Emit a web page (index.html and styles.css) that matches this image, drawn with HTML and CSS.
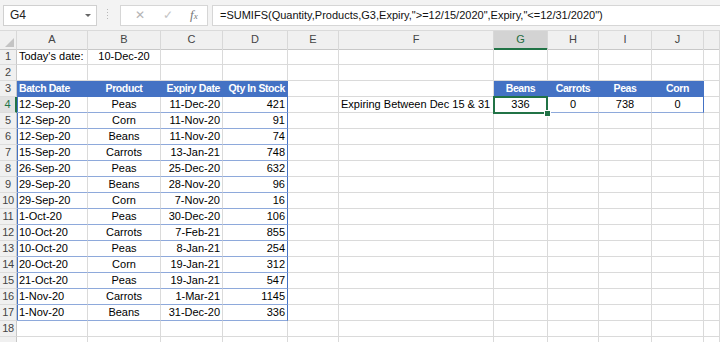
FILE: index.html
```html
<!DOCTYPE html>
<html lang="en">
<head>
    <meta charset="UTF-8">
    <meta name="viewport" content="width=device-width, initial-scale=1.0">
    <title>Expiry - SUMIFS</title>
    <link rel="stylesheet" href="styles.css">
</head>
<body>
    <div class="toolbar">
        <div class="name-box">
            <span>G4</span>
            <span class="arrow"></span>
        </div>
        <div class="grip"></div>
        <div class="fx-box">
            <span class="fx-icon">&#x2715;</span>
            <span class="fx-icon check">&#x2713;</span>
            <span class="fx-label"><i>f</i><small>x</small></span>
        </div>
        <div class="formula">=SUMIFS(Quantity,Products,G3,Expiry,"&gt;=12/15/2020",Expiry,"&lt;=12/31/2020")</div>
    </div>

    <div class="sheet">
        <div class="row col-head">
            <div class="corner"><span class="tri"></span></div>
            <div>A</div><div>B</div><div>C</div><div>D</div><div>E</div><div>F</div>
            <div class="sel">G</div><div>H</div><div>I</div><div>J</div><div></div>
        </div>

        <div class="row">
            <div class="rh">1</div>
            <div class="c">Today's date:</div><div class="c mid">10-Dec-20</div><div class="c"></div><div class="c"></div>
            <div class="c"></div><div class="c"></div><div class="c"></div><div class="c"></div><div class="c"></div><div class="c"></div><div class="c"></div>
        </div>
        <div class="row">
            <div class="rh">2</div>
            <div class="c"></div><div class="c"></div><div class="c"></div><div class="c"></div>
            <div class="c"></div><div class="c"></div><div class="c"></div><div class="c"></div><div class="c"></div><div class="c"></div><div class="c"></div>
        </div>
        <div class="row">
            <div class="rh">3</div>
            <div class="c th">Batch Date</div><div class="c th mid">Product</div><div class="c th right">Expiry Date</div><div class="c th right">Qty In Stock</div>
            <div class="c"></div><div class="c"></div>
            <div class="c th mid">Beans</div><div class="c th mid">Carrots</div><div class="c th mid">Peas</div><div class="c th mid">Corn</div><div class="c"></div>
        </div>
        <div class="row">
            <div class="rh active">4</div>
            <div class="c td first">12-Sep-20</div><div class="c td mid">Peas</div><div class="c td right">11-Dec-20</div><div class="c td right last">421</div>
            <div class="c"></div><div class="c">Expiring Between Dec 15 &amp; 31</div>
            <div class="c td mid selected">336</div><div class="c td mid">0</div><div class="c td mid">738</div><div class="c td mid last">0</div><div class="c"></div>
        </div>
        <div class="row">
            <div class="rh">5</div>
            <div class="c td first">12-Sep-20</div><div class="c td mid">Corn</div><div class="c td right">11-Nov-20</div><div class="c td right last">91</div>
            <div class="c"></div><div class="c"></div><div class="c"></div><div class="c"></div><div class="c"></div><div class="c"></div><div class="c"></div>
        </div>
        <div class="row">
            <div class="rh">6</div>
            <div class="c td first">12-Sep-20</div><div class="c td mid">Beans</div><div class="c td right">11-Nov-20</div><div class="c td right last">74</div>
            <div class="c"></div><div class="c"></div><div class="c"></div><div class="c"></div><div class="c"></div><div class="c"></div><div class="c"></div>
        </div>
        <div class="row">
            <div class="rh">7</div>
            <div class="c td first">15-Sep-20</div><div class="c td mid">Carrots</div><div class="c td right">13-Jan-21</div><div class="c td right last">748</div>
            <div class="c"></div><div class="c"></div><div class="c"></div><div class="c"></div><div class="c"></div><div class="c"></div><div class="c"></div>
        </div>
        <div class="row">
            <div class="rh">8</div>
            <div class="c td first">26-Sep-20</div><div class="c td mid">Peas</div><div class="c td right">25-Dec-20</div><div class="c td right last">632</div>
            <div class="c"></div><div class="c"></div><div class="c"></div><div class="c"></div><div class="c"></div><div class="c"></div><div class="c"></div>
        </div>
        <div class="row">
            <div class="rh">9</div>
            <div class="c td first">29-Sep-20</div><div class="c td mid">Beans</div><div class="c td right">28-Nov-20</div><div class="c td right last">96</div>
            <div class="c"></div><div class="c"></div><div class="c"></div><div class="c"></div><div class="c"></div><div class="c"></div><div class="c"></div>
        </div>
        <div class="row">
            <div class="rh">10</div>
            <div class="c td first">29-Sep-20</div><div class="c td mid">Corn</div><div class="c td right">7-Nov-20</div><div class="c td right last">16</div>
            <div class="c"></div><div class="c"></div><div class="c"></div><div class="c"></div><div class="c"></div><div class="c"></div><div class="c"></div>
        </div>
        <div class="row">
            <div class="rh">11</div>
            <div class="c td first">1-Oct-20</div><div class="c td mid">Peas</div><div class="c td right">30-Dec-20</div><div class="c td right last">106</div>
            <div class="c"></div><div class="c"></div><div class="c"></div><div class="c"></div><div class="c"></div><div class="c"></div><div class="c"></div>
        </div>
        <div class="row">
            <div class="rh">12</div>
            <div class="c td first">10-Oct-20</div><div class="c td mid">Carrots</div><div class="c td right">7-Feb-21</div><div class="c td right last">855</div>
            <div class="c"></div><div class="c"></div><div class="c"></div><div class="c"></div><div class="c"></div><div class="c"></div><div class="c"></div>
        </div>
        <div class="row">
            <div class="rh">13</div>
            <div class="c td first">10-Oct-20</div><div class="c td mid">Peas</div><div class="c td right">8-Jan-21</div><div class="c td right last">254</div>
            <div class="c"></div><div class="c"></div><div class="c"></div><div class="c"></div><div class="c"></div><div class="c"></div><div class="c"></div>
        </div>
        <div class="row">
            <div class="rh">14</div>
            <div class="c td first">20-Oct-20</div><div class="c td mid">Corn</div><div class="c td right">19-Jan-21</div><div class="c td right last">312</div>
            <div class="c"></div><div class="c"></div><div class="c"></div><div class="c"></div><div class="c"></div><div class="c"></div><div class="c"></div>
        </div>
        <div class="row">
            <div class="rh">15</div>
            <div class="c td first">21-Oct-20</div><div class="c td mid">Peas</div><div class="c td right">19-Jan-21</div><div class="c td right last">547</div>
            <div class="c"></div><div class="c"></div><div class="c"></div><div class="c"></div><div class="c"></div><div class="c"></div><div class="c"></div>
        </div>
        <div class="row">
            <div class="rh">16</div>
            <div class="c td first">1-Nov-20</div><div class="c td mid">Carrots</div><div class="c td right">1-Mar-21</div><div class="c td right last">1145</div>
            <div class="c"></div><div class="c"></div><div class="c"></div><div class="c"></div><div class="c"></div><div class="c"></div><div class="c"></div>
        </div>
        <div class="row">
            <div class="rh">17</div>
            <div class="c td first">1-Nov-20</div><div class="c td mid">Beans</div><div class="c td right">31-Dec-20</div><div class="c td right last">336</div>
            <div class="c"></div><div class="c"></div><div class="c"></div><div class="c"></div><div class="c"></div><div class="c"></div><div class="c"></div>
        </div>
        <div class="row">
            <div class="rh">18</div>
            <div class="c"></div><div class="c"></div><div class="c"></div><div class="c"></div>
            <div class="c"></div><div class="c"></div><div class="c"></div><div class="c"></div><div class="c"></div><div class="c"></div><div class="c"></div>
        </div>
        <div class="row">
            <div class="rh"></div>
            <div class="c"></div><div class="c"></div><div class="c"></div><div class="c"></div>
            <div class="c"></div><div class="c"></div><div class="c"></div><div class="c"></div><div class="c"></div><div class="c"></div><div class="c"></div>
        </div>
    </div>
</body>
</html>
```

FILE: styles.css
```css
body, html {
    margin: 0;
    padding: 0;
    font-family: "Liberation Sans", Arial, sans-serif;
    font-size: 11px;
    color: #000;
    background-color: #fff;
    overflow: hidden;
}

/* formula bar */
.toolbar {
    height: 31px;
    background-color: #f3f3f3;
    border-bottom: 1px solid #dadada;
    box-sizing: border-box;
    display: flex;
    align-items: center;
    padding-left: 3px;
}

.name-box {
    width: 94px;
    height: 21px;
    box-sizing: border-box;
    background-color: #fff;
    border: 1px solid #d0d0d0;
    display: flex;
    align-items: center;
    justify-content: space-between;
    padding: 0 5px 0 6px;
    font-size: 12px;
    color: #222;
}

.name-box .arrow {
    width: 0;
    height: 0;
    border-left: 3px solid transparent;
    border-right: 3px solid transparent;
    border-top: 3px solid #666;
}

.grip {
    width: 2px;
    height: 12px;
    margin: 0 11px 0 10px;
    background-image: linear-gradient(#b8b8b8 50%, transparent 50%);
    background-size: 1px 3px;
    background-repeat: repeat-y;
}

.fx-box {
    width: 88px;
    height: 21px;
    box-sizing: border-box;
    background-color: #fff;
    border: 1px solid #d6d6d6;
    display: flex;
    align-items: center;
    color: #b4b4b4;
    font-size: 12px;
}

.fx-icon {
    margin-left: 11px;
    width: 16px;
    text-align: center;
}

.fx-icon.check {
    margin-left: 12px;
    color: #c4c4c4;
}

.fx-label {
    margin-left: 14px;
    color: #777;
    font-family: "Liberation Serif", serif;
    font-size: 13px;
}

.fx-label small {
    font-size: 9px;
    font-style: italic;
}

.formula {
    flex: 1;
    height: 21px;
    margin-left: 4px;
    box-sizing: border-box;
    background-color: #fff;
    border: 1px solid #d6d6d6;
    border-right: none;
    padding-left: 7px;
    line-height: 19px;
    font-size: 11px;
    white-space: nowrap;
    color: #111;
}

/* grid */
.sheet {
    height: 311px;
    overflow: hidden;
}

.row {
    display: grid;
    grid-template-columns: 17px 71px 73px 62px 65px 51px 155px 54px 51px 53px 52px 1fr;
    height: 16px;
}

.col-head {
    height: 18px;
    background-color: #f0f0f0;
    color: #444;
}

.col-head div {
    border-right: 1px solid #d8d8d8;
    border-bottom: 1px solid #c8c8c8;
    box-sizing: border-box;
    text-align: center;
    line-height: 17px;
}

.col-head .sel {
    background-color: #d3d3d3;
    color: #1f6b3f;
    border-bottom: 2px solid #217346;
}

.corner {
    position: relative;
}

.corner .tri {
    position: absolute;
    right: 2px;
    bottom: 2px;
    width: 0;
    height: 0;
    border-left: 9px solid transparent;
    border-bottom: 9px solid #c4c4c4;
}

.rh {
    background-color: #f0f0f0;
    border-right: 1px solid #c8c8c8;
    border-bottom: 1px solid #dcdcdc;
    box-sizing: border-box;
    text-align: center;
    line-height: 15px;
    color: #444;
    font-size: 11px;
    letter-spacing: -0.3px;
}

.rh.active {
    background-color: #e1e1e1;
    color: #217346;
    border-right: 2px solid #217346;
}

.c {
    border-right: 1px solid #dadada;
    border-bottom: 1px solid #dadada;
    box-sizing: border-box;
    padding: 0 2px;
    line-height: 15px;
    white-space: nowrap;
}

.mid {
    text-align: center;
}

.right {
    text-align: right;
}

/* table style */
.th {
    background-color: #4472c4;
    color: #fff;
    font-weight: bold;
    font-size: 10.5px;
    letter-spacing: -0.4px;
    border-right-color: #4472c4;
    border-bottom-color: #4472c4;
}

.td {
    border-bottom-color: #8ea9db;
}

.td.first {
    box-shadow: inset 1px 0 0 #4472c4;
}

.td.last {
    border-right-color: #4472c4;
}

.selected {
    position: relative;
}

.selected::after {
    content: "";
    position: absolute;
    left: -1px;
    top: -1px;
    right: -1px;
    bottom: -2px;
    border: 2px solid #217346;
}

.selected::before {
    content: "";
    position: absolute;
    right: -4px;
    bottom: -5px;
    width: 5px;
    height: 5px;
    background-color: #217346;
    border: 1px solid #fff;
    z-index: 1;
}
```
